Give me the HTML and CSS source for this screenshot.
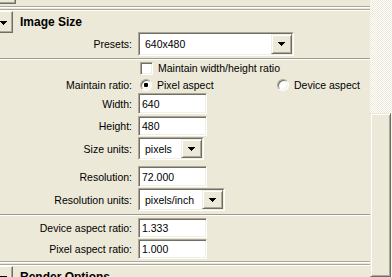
FILE: index.html
```html
<!DOCTYPE html>
<html lang="en">
<head>
    <meta charset="UTF-8">
    <meta name="viewport" content="width=device-width, initial-scale=1.0">
    <title>Image Size</title>
    <link rel="stylesheet" href="styles.css">
</head>
<body>
<div class="window">
    <div class="panel">
        <div class="topbtn"></div>
        <div class="dbl"></div>

        <div class="head">
            <span class="collapse">
                <svg class="tri" width="7" height="4" viewBox="0 0 7 4"><path d="M0 0h7v1H0zM1 1h5v1H1zM2 2h3v1H2zM3 3h1v1H3z"/></svg>
            </span>
            <span class="title">Image Size</span>
        </div>

        <div class="row r-presets">
            <span class="lbl">Presets:</span>
            <div class="select w-presets">
                <div class="select-in">
                    <span class="value">640x480</span>
                    <span class="drop"><svg width="7" height="4" viewBox="0 0 7 4"><path d="M0 0h7v1H0zM1 1h5v1H1zM2 2h3v1H2zM3 3h1v1H3z"/></svg></span>
                </div>
            </div>
        </div>

        <div class="sep"></div>

        <div class="row r-check">
            <span class="lbl"></span>
            <span class="check"></span>
            <span class="opt">Maintain width/height ratio</span>
        </div>

        <div class="row r-radio">
            <span class="lbl">Maintain ratio:</span>
            <span class="choice first"><span class="radio on"></span><span class="opt">Pixel aspect</span></span>
            <span class="choice"><span class="radio"></span><span class="opt">Device aspect</span></span>
        </div>

        <div class="row r-width">
            <span class="lbl">Width:</span>
            <span class="field w-num">640</span>
        </div>

        <div class="row r-height">
            <span class="lbl">Height:</span>
            <span class="field w-num">480</span>
        </div>

        <div class="row r-units">
            <span class="lbl">Size units:</span>
            <div class="select w-units">
                <div class="select-in">
                    <span class="value">pixels</span>
                    <span class="drop"><svg width="7" height="4" viewBox="0 0 7 4"><path d="M0 0h7v1H0zM1 1h5v1H1zM2 2h3v1H2zM3 3h1v1H3z"/></svg></span>
                </div>
            </div>
        </div>

        <div class="row r-res">
            <span class="lbl">Resolution:</span>
            <span class="field w-num">72.000</span>
        </div>

        <div class="row r-resunits">
            <span class="lbl">Resolution units:</span>
            <div class="select w-resunits">
                <div class="select-in">
                    <span class="value">pixels/inch</span>
                    <span class="drop"><svg width="7" height="4" viewBox="0 0 7 4"><path d="M0 0h7v1H0zM1 1h5v1H1zM2 2h3v1H2zM3 3h1v1H3z"/></svg></span>
                </div>
            </div>
        </div>

        <div class="sep sep2"></div>

        <div class="row r-device">
            <span class="lbl">Device aspect ratio:</span>
            <span class="field w-num">1.333</span>
        </div>

        <div class="row r-pixel">
            <span class="lbl">Pixel aspect ratio:</span>
            <span class="field w-num">1.000</span>
        </div>

        <div class="dbl dbl2"></div>

        <div class="head">
            <span class="collapse">
                <svg class="tri" width="7" height="4" viewBox="0 0 7 4"><path d="M0 0h7v1H0zM1 1h5v1H1zM2 2h3v1H2zM3 3h1v1H3z"/></svg>
            </span>
            <span class="title">Render Options</span>
        </div>
    </div>

    <div class="scrollbar">
        <div class="thumb"></div>
    </div>
</div>
</body>
</html>
```

FILE: styles.css
```css
body {
    margin: 0;
    font-family: "Liberation Sans", Arial, sans-serif;
    font-size: 10.5px;
    color: #000;
    background-color: #ECE9D8;
}
.window {
    display: flex;
    width: 392px;
    height: 277px;
    overflow: hidden;
}
.panel {
    width: 370px;
    flex: none;
    background-color: #ECE9D8;
}

/* bits of the window chrome */
.topbtn {
    width: 15px;
    height: 3px;
    border-right: 1px solid #716F64;
    border-bottom: 1px solid #716F64;
    box-shadow: inset -1px -1px 0 #ACA899;
}
.dbl {
    margin-top: 2px;
    height: 5px;
    background: linear-gradient(#ACA899 0 1px, #fff 1px 2px, transparent 2px 3px, #ACA899 3px 4px, #fff 4px 5px);
}
.dbl2 {
    margin-top: 2px;
}
.sep {
    margin-top: 2px;
    height: 2px;
    background: linear-gradient(#9D9A8C 0 1px, #fff 1px 2px);
}
.sep2 {
    margin-top: 3px;
}

/* section header */
.head {
    display: flex;
    align-items: center;
    height: 21px;
}
.collapse {
    width: 13px;
    height: 22px;
    flex: none;
    align-self: flex-start;
    display: flex;
    align-items: center;
    border-right: 1px solid #716F64;
    border-bottom: 1px solid #716F64;
    border-top: 1px solid #fff;
    box-sizing: border-box;
    box-shadow: inset -1px -1px 0 #ACA899;
}
.tri {
    margin-left: 0;
    margin-top: 1px;
}
.title {
    margin-left: 7px;
    font-size: 12px;
    font-weight: bold;
}

/* form rows */
.row {
    display: flex;
    align-items: center;
}
.lbl {
    width: 132px;
    padding-right: 6px;
    text-align: right;
    flex: none;
}
.r-presets { height: 24px; }
.r-check { height: 16px; }
.r-radio { height: 17px; }
.r-width { height: 21px; }
.r-height { height: 20px; margin-top: 2px; }
.r-units { height: 23px; margin-top: 1px; }
.r-res { height: 21px; margin-top: 6px; }
.r-resunits { height: 23px; margin-top: 1px; }
.r-device { height: 20px; margin-top: 2px; }
.r-pixel { height: 20px; margin-top: 1px; }

/* sunken text box */
.field {
    box-sizing: border-box;
    height: 100%;
    display: flex;
    align-items: center;
    padding-left: 3px;
    background-color: #fff;
    border: 1px solid;
    border-color: #ACA899 #fff #fff #ACA899;
    box-shadow: inset 1px 1px 0 #716F64, inset -1px -1px 0 #F1EFE2;
}
.w-num { width: 69px; }

/* drop down */
.select {
    box-sizing: border-box;
    height: 100%;
    border: 1px solid;
    border-color: #ACA899 #fff #fff #ACA899;
}
.select-in {
    box-sizing: border-box;
    height: 100%;
    display: flex;
    background-color: #fff;
    border: 1px solid;
    border-color: #716F64 #F1EFE2 #F1EFE2 #716F64;
}
.value {
    flex: 1;
    display: flex;
    align-items: center;
    padding-left: 5px;
}
.drop {
    width: 21px;
    flex: none;
    box-sizing: border-box;
    display: flex;
    align-items: center;
    justify-content: center;
    background-color: #ECE9D8;
    border: 1px solid;
    border-color: #F1EFE2 #716F64 #716F64 #F1EFE2;
    box-shadow: inset 1px 1px 0 #fff, inset -1px -1px 0 #ACA899;
}
.w-presets { width: 156px; }
.w-units { width: 66px; }
.w-resunits { width: 87px; }

/* check box and radios */
.check {
    width: 13px;
    height: 13px;
    box-sizing: border-box;
    margin-left: 2px;
    margin-right: 5px;
    background-color: #fff;
    border: 1px solid;
    border-color: #ACA899 #fff #fff #ACA899;
    box-shadow: inset 1px 1px 0 #716F64, inset -1px -1px 0 #F1EFE2;
}
.choice {
    display: flex;
    align-items: center;
}
.choice.first {
    width: 139px;
}
.radio {
    position: relative;
    width: 12px;
    height: 12px;
    box-sizing: border-box;
    margin-left: 2px;
    margin-right: 5px;
    border-radius: 50%;
    background-color: #fff;
    border: 1px solid;
    border-color: #ACA899 #fff #fff #ACA899;
    box-shadow: inset 1px 1px 0 #716F64, inset -1px -1px 0 #F1EFE2;
}
.choice.first .radio {
    margin-left: 2px;
}
.choice + .choice .radio {
    margin-left: 0;
}
.radio.on::after {
    content: "";
    position: absolute;
    left: 3px;
    top: 3px;
    width: 4px;
    height: 4px;
    border-radius: 1px;
    background-color: #000;
}

/* scrollbar */
.scrollbar {
    width: 22px;
    flex: none;
    padding-top: 113px;
    display: flex;
    flex-direction: column;
    background: repeating-conic-gradient(#fff 0 25%, #ECE9D8 0 50%) 0 0 / 2px 2px;
}
.thumb {
    flex: 1;
    width: 21px;
    box-sizing: border-box;
    background-color: #ECE9D8;
    border: 1px solid;
    border-color: #ECE9D8 #716F64 #716F64 #ECE9D8;
    box-shadow: inset 1px 1px 0 #fff, inset -1px -1px 0 #ACA899;
}
```
